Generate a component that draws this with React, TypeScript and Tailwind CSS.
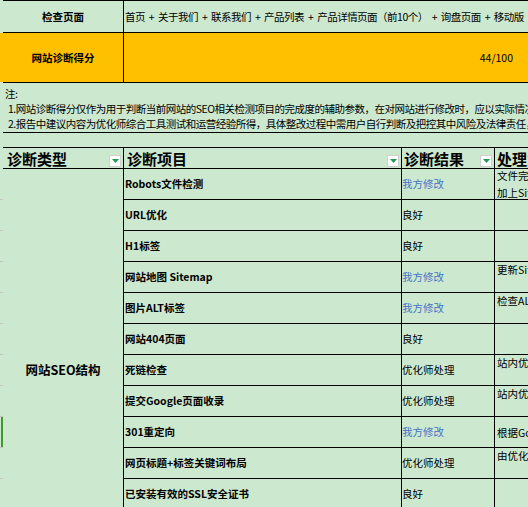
import React from 'react';

type Row = {
    item: string;
    result: string;
    blue?: boolean;
    note?: string[];
    noteCenter?: boolean;
};

const rows: Row[] = [
    { item: 'Robots文件检测', result: '我方修改', blue: true, note: ['文件完整，建议', '加上Sitemap地址'], noteCenter: true },
    { item: 'URL优化', result: '良好' },
    { item: 'H1标签', result: '良好' },
    { item: '网站地图 Sitemap', result: '我方修改', blue: true, note: ['更新Sitemap文件'] },
    { item: '图片ALT标签', result: '我方修改', blue: true, note: ['检查ALT标签'] },
    { item: '网站404页面', result: '良好' },
    { item: '死链检查', result: '优化师处理', note: ['站内优化'] },
    { item: '提交Google页面收录', result: '优化师处理', note: ['站内优化'] },
    { item: '301重定向', result: '我方修改', blue: true, note: ['根据Google'], noteCenter: true },
    { item: '网页标题+标签关键词布局', result: '优化师处理', note: ['由优化师'] },
    { item: '已安装有效的SSL安全证书', result: '良好' },
    { item: '', result: '' },
    { item: '', result: '' },
];

function FilterButton() {
    return (
        <div className="absolute right-[2px] bottom-[1px] w-[12px] h-[12px] bg-white border border-[#d0d0d0] flex items-center justify-center">
            <svg width="7" height="4" viewBox="0 0 7 4">
                <path d="M0 0 L7 0 L3.5 4 Z" fill="#1f9d55" />
            </svg>
        </div>
    );
}

export default function App() {
    return (
        <div className="w-[528px] h-[507px] overflow-hidden bg-[#cce8cf] flex text-black font-['Noto_Sans_CJK_SC','Microsoft_YaHei',sans-serif] text-[10.5px]">
            {/* left strip of the neighbouring column */}
            <div className="w-[3px] shrink-0 flex flex-col">
                <div className="h-[33px] shrink-0" />
                <div className="h-[49px] shrink-0 bg-[#ffc000]" />
                <div className="h-[86px] shrink-0" />
                <div className="h-[32px] shrink-0 border-b border-[#c4c4c4]" />
                {rows.slice(1).map((_, i) => (
                    <div key={i} className="h-[31px] shrink-0 border-b border-[#c4c4c4] flex">
                        {i === 7 && <div className="ml-[1px] w-[2px] h-full bg-[#3d9a2c]" />}
                    </div>
                ))}
            </div>

            <div className="w-[525px] shrink-0 flex flex-col">
                {/* 检查页面 */}
                <div className="grid grid-cols-[121px_1fr] h-[33px] shrink-0 border-t border-b border-black">
                    <div className="border-r border-black flex items-center justify-center font-bold">检查页面</div>
                    <div className="flex items-center pl-[1px] whitespace-nowrap overflow-hidden tracking-[-0.5px] [word-spacing:2px]">
                        首页 + 关于我们 + 联系我们 + 产品列表 + 产品详情页面（前10个） + 询盘页面 + 移动版
                    </div>
                </div>

                {/* 网站诊断得分 */}
                <div className="grid grid-cols-[121px_1fr] h-[50px] shrink-0 border-b border-black bg-[#ffc000]">
                    <div className="border-r border-black flex items-center justify-center font-bold">网站诊断得分</div>
                    <div className="flex items-center justify-end pr-[15px]">44/100</div>
                </div>

                {/* 注 */}
                <div className="h-[50px] shrink-0 border-b border-black pl-[2px] pt-[3px] leading-[15px] whitespace-nowrap tracking-[-0.5px]">
                    <div>注:</div>
                    <div className="pl-[3px]">1.网站诊断得分仅作为用于判断当前网站的SEO相关检测项目的完成度的辅助参数，在对网站进行修改时，应以实际情况为准。</div>
                    <div className="pl-[3px]">2.报告中建议内容为优化师综合工具测试和运营经验所得，具体整改过程中需用户自行判断及把控其中风险及法律责任，</div>
                </div>

                <div className="h-[15px] shrink-0 border-b border-black" />

                {/* table */}
                <div className="grid grid-cols-[121px_278px_93px_200px] grid-rows-[21px_repeat(13,31px)] w-[692px]">
                    <div className="relative border-r border-b border-black pl-[4px] flex items-center text-[15px] font-bold leading-none">
                        诊断类型
                        <FilterButton />
                    </div>
                    <div className="relative border-r border-b border-black pl-[3px] flex items-center text-[15px] font-bold leading-none">
                        诊断项目
                        <FilterButton />
                    </div>
                    <div className="relative border-r border-b border-black pl-[2px] flex items-center text-[15px] font-bold leading-none">
                        诊断结果
                        <FilterButton />
                    </div>
                    <div className="border-r border-b border-black pl-[2px] flex items-center text-[15px] font-bold leading-none whitespace-nowrap">
                        处理意见
                    </div>

                    <div className="row-span-13 border-r border-b border-black flex items-center justify-center font-bold text-[12.5px]">
                        网站SEO结构
                    </div>
                    {rows.map((r, i) => (
                        <React.Fragment key={i}>
                            <div className="border-r border-b border-black pl-[1px] flex items-center font-bold whitespace-nowrap">
                                {r.item}
                            </div>
                            <div className={`border-r border-b border-black flex items-center whitespace-nowrap ${r.blue ? 'text-[#4472c4]' : ''}`}>
                                {r.result}
                            </div>
                            <div className={`border-r border-b border-black pl-[2px] overflow-hidden whitespace-nowrap flex flex-col ${r.noteCenter ? 'justify-center leading-[17px]' : 'justify-start leading-[15px]'}`}>
                                {r.note?.map((n, j) => <div key={j}>{n}</div>)}
                            </div>
                        </React.Fragment>
                    ))}
                </div>
            </div>
        </div>
    );
}
